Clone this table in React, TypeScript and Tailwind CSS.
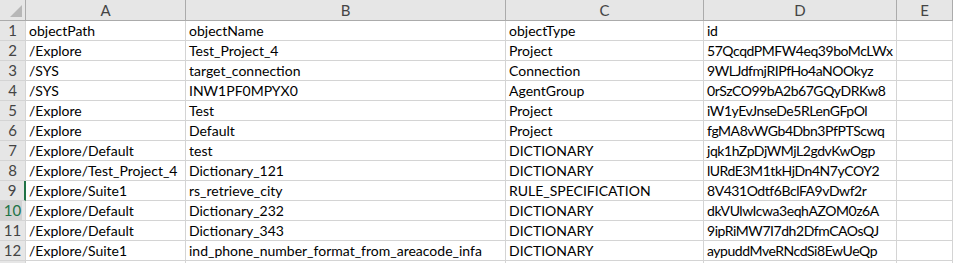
const columns = ["A", "B", "C", "D", "E"];

const rows: [string, string, string, string][] = [
  ["objectPath", "objectName", "objectType", "id"],
  ["/Explore", "Test_Project_4", "Project", "57QcqdPMFW4eq39boMcLWx"],
  ["/SYS", "target_connection", "Connection", "9WLJdfmjRIPfHo4aNOOkyz"],
  ["/SYS", "INW1PF0MPYX0", "AgentGroup", "0rSzCO99bA2b67GQyDRKw8"],
  ["/Explore", "Test", "Project", "iW1yEvJnseDe5RLenGFpOl"],
  ["/Explore", "Default", "Project", "fgMA8vWGb4Dbn3PfPTScwq"],
  ["/Explore/Default", "test", "DICTIONARY", "jqk1hZpDjWMjL2gdvKwOgp"],
  ["/Explore/Test_Project_4", "Dictionary_121", "DICTIONARY", "lURdE3M1tkHjDn4N7yCOY2"],
  ["/Explore/Suite1", "rs_retrieve_city", "RULE_SPECIFICATION", "8V431Odtf6BclFA9vDwf2r"],
  ["/Explore/Default", "Dictionary_232", "DICTIONARY", "dkVUlwIcwa3eqhAZOM0z6A"],
  ["/Explore/Default", "Dictionary_343", "DICTIONARY", "9ipRiMW7I7dh2DfmCAOsQJ"],
  ["/Explore/Suite1", "ind_phone_number_format_from_areacode_infa", "DICTIONARY", "aypuddMveRNcdSi8EwUeQp"],
];

const gridCols = "grid grid-cols-[26px_160px_320px_198px_193px_1fr]";

function RowHeader({ n }: { n: number }) {
  const selected = n === 10;
  const cursor = n === 9;
  return (
    <div
      className={`flex h-5 items-center justify-center border-b border-r border-[#d4d4d4] text-[15px] ${
        selected ? "bg-[linear-gradient(to_right,#d2d2d2_22px,#e6e6e6_22px)] text-[#217346]" : "bg-[#e6e6e6] text-[#444]"
      } ${cursor ? "border-r-2 border-r-[#217346]" : ""}`}
    >
      {n <= 12 ? n : ""}
    </div>
  );
}

export default function App() {
  return (
    <div className="h-[263px] w-[953px] overflow-hidden bg-white font-['Lato','Liberation_Sans',sans-serif] text-[14px] leading-none text-black">
      <div className={`${gridCols} h-[21px] border-b border-[#ababab] bg-[#e6e6e6] text-[15px] text-[#444]`}>
        <div className="relative border-r border-[#ababab]">
          <div className="absolute left-[10px] top-[5px] h-0 w-0 border-b-[12px] border-l-[12px] border-b-[#b7b7b7] border-l-transparent" />
        </div>
        {columns.map((c) => (
          <div key={c} className="flex items-center justify-center border-r border-[#ababab]">
            {c}
          </div>
        ))}
      </div>
      {[...rows, ["", "", "", ""] as [string, string, string, string]].map((r, i) => (
        <div key={i} className={gridCols}>
          <RowHeader n={i + 1} />
          {[...r, ""].map((cell, j) => (
            <div
              key={j}
              className={`flex h-5 items-center overflow-hidden whitespace-nowrap border-b border-r border-[#d4d4d4] pl-[3px] ${
                j === 3 ? "tracking-[-0.45px]" : ""
              }`}
            >
              {cell}
            </div>
          ))}
        </div>
      ))}
    </div>
  );
}
